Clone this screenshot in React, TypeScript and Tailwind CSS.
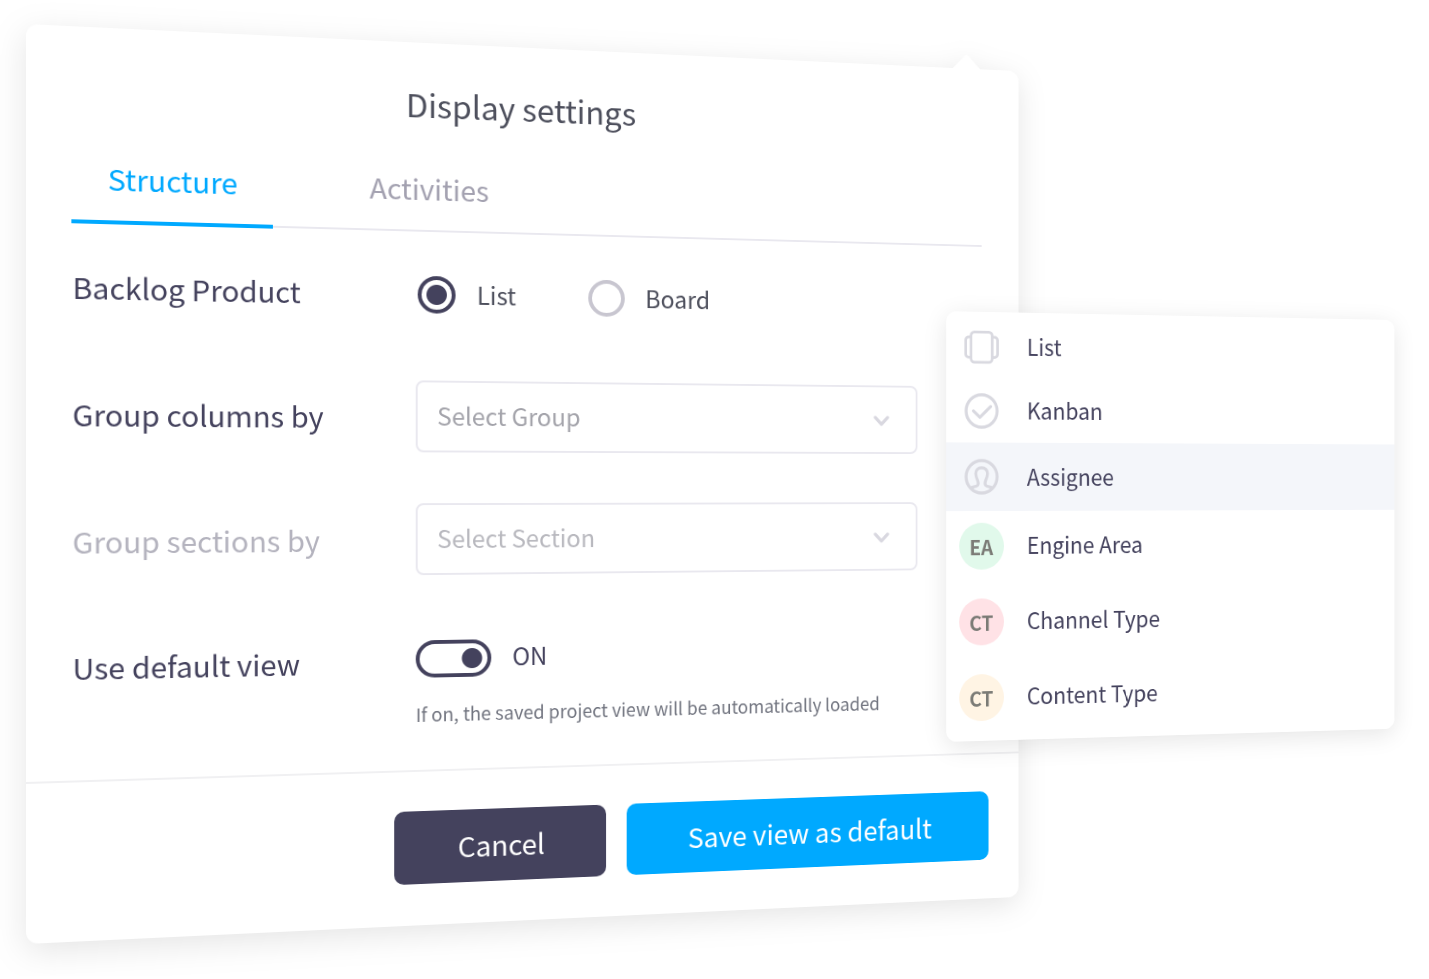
import type { ReactNode } from "react";

interface MenuItem {
  label: string;
  icon?: ReactNode;
  initials?: string;
  tint?: string;
  active?: boolean;
}

function ListIcon() {
  return (
    <svg viewBox="0 0 40 40" className="size-[40px]" fill="none" stroke="#d9d9e0" strokeWidth="3">
      <rect x="7.7" y="3.5" width="24.6" height="33.5" rx="4" />
      <path d="M7.5 9H5a3.500 3.500 0 0 0-3.500 3.500v15.500A3.500 3.500 0 0 0 5 31.500h2.500M32.500 9H35a3.500 3.500 0 0 1 3.500 3.500v15.500a3.500 3.500 0 0 1-3.500 3.500h-2.500" />
    </svg>
  );
}

function KanbanIcon() {
  return (
    <svg viewBox="0 0 40 40" className="size-[40px]" fill="none" stroke="#d9d9e0" strokeWidth="3.4">
      <circle cx="20" cy="20" r="18" />
      <path d="M10.500 20l7.500 7 12.500-12" strokeLinecap="round" strokeLinejoin="round" />
    </svg>
  );
}

function AssigneeIcon() {
  return (
    <svg viewBox="0 0 40 40" className="size-[40px]" fill="none" stroke="#d9d9e0" strokeWidth="3.4">
      <circle cx="20" cy="20" r="18" />
      <path
        d="M8 32c2.500-1 6-1 7.300-2.500 1.200-1.500.7-3.500.1-5.200-1.200-2.600-2.200-5-2.200-7.800 0-4 2.800-6.500 6.800-6.500s6.800 2.500 6.800 6.500c0 2.800-1 5.200-2.200 7.800-.6 1.700-1.100 3.700.1 5.200C26 31 29.500 31 32 32"
        strokeLinejoin="round"
      />
    </svg>
  );
}

const menuItems: MenuItem[] = [
  { label: "List", icon: <ListIcon /> },
  { label: "Kanban", icon: <KanbanIcon /> },
  { label: "Assignee", icon: <AssigneeIcon />, active: true },
  { label: "Engine Area", initials: "EA", tint: "bg-[#e1f9eb]" },
  { label: "Channel Type", initials: "CT", tint: "bg-[#ffe2e6]" },
  { label: "Content Type", initials: "CT", tint: "bg-[#fff4e4]" },
];

function SelectField({ id, placeholder, tone }: { id: string; placeholder: string; tone: string }) {
  return (
    <div className="relative w-[543px]">
      <select
        id={id}
        className={`block h-[75px] w-full appearance-none rounded-lg border-2 border-[#e9e8ef] bg-white px-5 pb-[2px] text-[25px] ${tone}`}
      >
        <option>{placeholder}</option>
      </select>
      <svg
        viewBox="0 0 18 12"
        className="pointer-events-none absolute top-[33px] right-8 h-[12px] w-[18px]"
        fill="none"
        stroke="#d9d8e0"
        strokeWidth="3.4"
        strokeLinecap="round"
        strokeLinejoin="round"
      >
        <path d="M2 2l7 7.500L16 2" />
      </svg>
    </div>
  );
}

function ViewRadio({ label, checked }: { label: string; checked?: boolean }) {
  return (
    <label className="flex items-center gap-[22px] text-[25px] leading-[36px] text-[#4d4f5c]">
      <input
        type="radio"
        name="view"
        defaultChecked={checked}
        className="size-[39px] appearance-none rounded-full border-[4px] border-[#c8c6d0] checked:border-[#44425d] checked:bg-[radial-gradient(circle,#44425d_10px,transparent_11px)]"
      />
      <span className="pb-1">{label}</span>
    </label>
  );
}

function DisplaySettings() {
  return (
    <section className="rounded-[12px] bg-white drop-shadow-[0_8px_16px_rgba(0,0,0,0.1)]">
      <div className="absolute -top-[11px] left-[971px] size-[23px] rotate-45 bg-white" />

      <h1 className="pt-[39px] pr-[56px] text-center text-[33px] leading-[50px] text-[#4d4f5c]">
        Display settings
      </h1>

      <nav className="mx-[43px] mt-10 flex border-b-2 border-[#e9e8ef]">
        <button className="-mb-[3px] w-[196px] border-b-4 border-[#00a9ff] pb-[21px] text-[29px] leading-[44px] text-[#00a9ff]">
          Structure
        </button>
        <button className="ml-[97px] pb-[22px] text-[29px] leading-[44px] text-[#a3a1b0]">Activities</button>
      </nav>

      <form className="pb-[44px] pl-[44px] text-[29px] leading-[44px] text-[#44425d]">
        <div className="grid h-[128px] grid-cols-[339px_1fr] items-center">
          <span>Backlog Product</span>
          <div className="flex gap-[76px] pt-[3px] pl-[2px]">
            <ViewRadio label="List" checked />
            <ViewRadio label="Board" />
          </div>
        </div>
        <div className="grid h-[128px] grid-cols-[339px_1fr] items-center">
          <label htmlFor="columns">Group columns by</label>
          <SelectField id="columns" placeholder="Select Group" tone="text-[#a3a3aa]" />
        </div>
        <div className="grid h-[128px] grid-cols-[339px_1fr] items-center">
          <label htmlFor="sections" className="text-[#b4b3be]">
            Group sections by
          </label>
          <SelectField id="sections" placeholder="Select Section" tone="text-[#b8b8be]" />
        </div>
        <div className="grid grid-cols-[339px_1fr] items-start pt-[41px]">
          <label htmlFor="default-view">Use default view</label>
          <div>
            <div className="flex items-center gap-[22px]">
              <input
                id="default-view"
                type="checkbox"
                role="switch"
                defaultChecked
                className="h-[39px] w-[78px] appearance-none rounded-full border-[4px] border-[#44425d] bg-[radial-gradient(circle_at_16px_50%,#44425d_10px,transparent_11px)] checked:bg-[radial-gradient(circle_at_54px_50%,#44425d_10px,transparent_11px)]"
              />
              <span className="pb-1 text-[25px] leading-[36px]">ON</span>
            </div>
            <p className="mt-6 text-[19px] leading-[28px] text-[#71747f]">
              If on, the saved project view will be automatically loaded
            </p>
          </div>
        </div>
      </form>

      <footer className="flex justify-end gap-[22px] border-t-2 border-[#f0f0f2] px-[35px] pt-[41px] pb-[43px] text-[29px] text-white">
        <button className="h-[76px] w-[221px] rounded-[10px] bg-[#44425d]">Cancel</button>
        <button className="h-[76px] w-[404px] rounded-[10px] bg-[#00a9ff]">Save view as default</button>
      </footer>
    </section>
  );
}

function GroupMenu() {
  return (
    <ul className="absolute top-[269px] left-[91.9%] w-[52.2%] rounded-[12px] bg-white py-[3px] text-[25px] leading-[36px] text-[#44425d] shadow-[0_6px_28px_rgba(0,0,0,0.1)]">
      {menuItems.map((item) => (
        <li key={item.label}>
          <button
            className={`flex w-full items-center text-left ${
              item.initials ? "h-[84px] pb-[7px]" : item.active ? "h-[76px] bg-[#f4f6fa]" : "h-[71px]"
            }`}
          >
            <span className="flex w-[82px] justify-center">
              {item.icon}
              {item.initials && (
                <span
                  className={`flex size-[52px] items-center justify-center rounded-full text-[22px] font-bold text-[#7b7b76] ${item.tint}`}
                >
                  {item.initials}
                </span>
              )}
            </span>
            <span className="pb-[3px] pl-3">{item.label}</span>
          </button>
        </li>
      ))}
    </ul>
  );
}

export default function App() {
  return (
    <main className="overflow-hidden bg-white px-[26px] pt-6 pb-8 font-['Noto_Sans_CJK_SC',sans-serif]">
      <div className="w-[73vw] [perspective-origin:750px_50%] [perspective:1900px]">
        <div className="relative origin-left [transform:rotateY(12deg)]">
          <DisplaySettings />
          <GroupMenu />
        </div>
      </div>
    </main>
  );
}
